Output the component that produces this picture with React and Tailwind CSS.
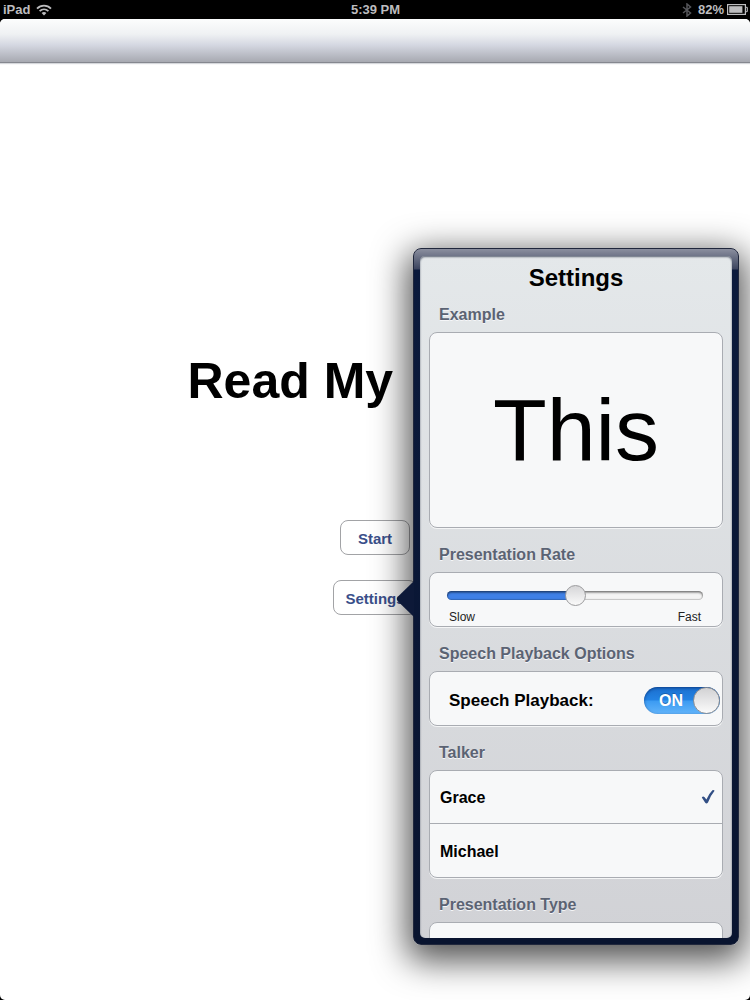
import React, { useState } from 'react';

const cardClass =
  'overflow-hidden rounded-lg border border-[#a9acb2] bg-[#f7f8f9] shadow-[0_1px_0_#f4f5f6]';

function StatusBar() {
  return (
    <header className="grid h-[19px] grid-cols-3 items-center bg-black pl-[3px] pr-[2px] text-[13px] leading-[19px] font-bold text-[#bdbdbf]">
      <div className="flex items-center gap-[6px]">
        <span>iPad</span>
        <svg width="16" height="12" viewBox="0 0 16 12" fill="none" stroke="#bdbdbf" strokeWidth="1.8">
          <path d="M1 4.6C5 .6 11 .6 15 4.6" />
          <path d="M3.6 7.2C6.2 4.7 9.8 4.7 12.4 7.2" />
          <path d="M8 11.6L5.6 9C7 7.8 9 7.8 10.4 9Z" fill="#bdbdbf" stroke="none" />
        </svg>
      </div>
      <span className="text-center">5:39 PM</span>
      <div className="flex items-center justify-end gap-[3px]">
        <svg className="mr-[3px]" width="10" height="14" viewBox="0 0 10 14" fill="none" stroke="#55565a" strokeWidth="1.5">
          <path d="M1 4L8.5 10L5 13V1L8.5 4L1 10" />
        </svg>
        <span>82%</span>
        <svg width="21" height="11" viewBox="0 0 21 11">
          <rect x=".6" y=".6" width="17.8" height="9.8" fill="none" stroke="#bdbdbf" strokeWidth="1.2" />
          <rect x="2.2" y="2.2" width="13.2" height="6.6" fill="#bdbdbf" />
          <path d="M18.6 3.2H19.4Q20.3 3.2 20.3 4V7Q20.3 7.8 19.4 7.8H18.6" fill="none" stroke="#bdbdbf" strokeWidth="1.1" />
        </svg>
      </div>
    </header>
  );
}

function Section({ title, children }) {
  return (
    <section>
      <h3 className="mt-2 h-9 pl-[10px] text-[16px] leading-[38px] font-bold text-[#5b6373] [text-shadow:0_1px_0_#f5f6f8]">
        {title}
      </h3>
      {children}
    </section>
  );
}

function SettingsPopover() {
  const [rate, setRate] = useState(50);
  const [speech, setSpeech] = useState(true);
  const [talker, setTalker] = useState('Grace');

  return (
    <div className="absolute top-[248px] right-[11px] bottom-[55px] w-[326px] rounded-lg border border-[#20273c] bg-[linear-gradient(to_bottom,#8b8f9f_0px,#5b6278_12px,#3d455f_20px,#0b1a3c_21px,#09142f_100%)] px-[6px] pt-[7px] pb-[6px] shadow-[0_10px_34px_6px_rgba(0,0,0,0.68)]">
      <svg className="absolute top-[332px] -left-[18px]" width="18" height="36" viewBox="0 0 18 36">
        <path d="M18 0V36L1.5 20Q0 18 1.5 16Z" fill="#0d1938" />
      </svg>

      <div className="h-full overflow-hidden rounded-[5px] bg-linear-to-b from-[#e4e8ea] to-[#d1d2d6] px-[9px] shadow-[inset_0_1px_2px_#5c6474]">
        <h2 className="h-10 pt-1 text-center text-[24px] leading-9 font-bold text-black">Settings</h2>
        <h3 className="h-9 pl-[10px] text-[16px] leading-[38px] font-bold text-[#5b6373] [text-shadow:0_1px_0_#f5f6f8]">
          Example
        </h3>
        <div className={`${cardClass} flex h-[196px] items-center justify-center text-[88px] leading-none text-black`}>
          This
        </div>

        <Section title="Presentation Rate">
          <div className={`${cardClass} h-[55px] pt-[11px] pr-[19px] pl-[17px]`}>
            <input
              type="range"
              aria-label="Presentation Rate"
              min="0"
              max="100"
              value={rate}
              onChange={(e) => setRate(Number(e.target.value))}
              style={{ '--rate': `${rate}%` }}
              className="block h-[22px] w-full appearance-none bg-transparent [&::-webkit-slider-runnable-track]:h-[9px] [&::-webkit-slider-runnable-track]:rounded-full [&::-webkit-slider-runnable-track]:bg-[linear-gradient(to_right,#3f80e6_var(--rate),#f4f4f4_var(--rate))] [&::-webkit-slider-runnable-track]:shadow-[inset_0_2px_2px_rgba(0,0,0,0.35),inset_0_0_1px_1px_rgba(0,0,0,0.2)] [&::-webkit-slider-thumb]:-mt-[6px] [&::-webkit-slider-thumb]:size-[21px] [&::-webkit-slider-thumb]:appearance-none [&::-webkit-slider-thumb]:rounded-full [&::-webkit-slider-thumb]:border [&::-webkit-slider-thumb]:border-[#9b9b9d] [&::-webkit-slider-thumb]:bg-linear-to-b [&::-webkit-slider-thumb]:from-[#d6d6d8] [&::-webkit-slider-thumb]:to-[#fafafa]"
            />
            <div className="flex justify-between px-[2px] text-[12px] leading-[22px] text-[#222222]">
              <span>Slow</span>
              <span>Fast</span>
            </div>
          </div>
        </Section>

        <Section title="Speech Playback Options">
          <label className={`${cardClass} flex h-[55px] items-center justify-between pr-[2px] pl-[19px] pt-1`}>
            <span className="pt-px text-[17px] font-bold text-black">Speech Playback:</span>
            <input
              type="checkbox"
              role="switch"
              checked={speech}
              onChange={(e) => setSpeech(e.target.checked)}
              className="peer sr-only"
            />
            <span className="flex h-[27px] w-[76px] items-center justify-between rounded-full bg-[linear-gradient(to_bottom,#1b6fce_0%,#2383e4_48%,#3c9bf2_52%,#62b4fa_100%)] pl-[15px] text-[16px] font-bold text-white shadow-[inset_0_1px_3px_rgba(0,30,90,0.6)] [text-shadow:0_-1px_0_#1b5fae]">
              <span>{speech ? 'ON' : 'OFF'}</span>
              <span className="size-[27px] rounded-full border border-[#8e8f93] bg-linear-to-b from-[#d2d2d4] to-[#fbfbfb]" />
            </span>
          </label>
        </Section>

        <Section title="Talker">
          <div className={`${cardClass} divide-y divide-[#a9acb2]`}>
            {['Grace', 'Michael'].map((name) => (
              <label
                key={name}
                className="flex h-[53px] items-center justify-between pt-[2px] pr-[7px] pl-[10px] text-[16px] font-bold text-black"
              >
                <span>{name}</span>
                <input
                  type="radio"
                  name="talker"
                  value={name}
                  checked={talker === name}
                  onChange={() => setTalker(name)}
                  className="sr-only"
                />
                {talker === name && (
                  <svg className="mb-[2px]" width="14" height="16" viewBox="0 0 14 16" fill="#324f85">
                    <path d="M.8 8.4Q2 6.8 3.4 8L5.4 10.4Q7.6 5 11.4 1.2Q12.8.6 13.6 1.8Q9.6 6.6 7 13.4Q5.6 15.2 4.2 13.8Z" />
                  </svg>
                )}
              </label>
            ))}
          </div>
        </Section>

        <Section title="Presentation Type">
          <div className={`${cardClass} h-[55px]`} />
        </Section>
      </div>
    </div>
  );
}

export default function App() {
  const buttonClass =
    'h-[35px] rounded-lg border border-[#a2a3a6] bg-white px-[11px] pt-[3px] text-[15px] font-bold text-[#3a4f8a]';

  return (
    <div className="relative flex min-h-screen flex-col overflow-hidden bg-black font-['Liberation_Sans',Arial,sans-serif]">
      <StatusBar />
      <div className="flex flex-1 flex-col overflow-hidden rounded-[5px] bg-white">
        <nav className="h-11 border-b border-[#85878f] bg-[linear-gradient(to_bottom,#fcfdfd_0%,#eff1f3_35%,#d5d8e2_60%,#a7a9b1_100%)] shadow-[0_1px_1px_#d5d7db]" />
        <main className="flex flex-col items-center pt-[288px]">
          <h1 className="w-1/2 text-[50px] leading-[60px] font-bold text-black">Read My</h1>
          <button type="button" className={`${buttonClass} mt-[109px] min-w-[70px]`}>
            Start
          </button>
          <button type="button" className={`${buttonClass} mt-[25px]`}>
            Settings
          </button>
        </main>
      </div>
      <SettingsPopover />
    </div>
  );
}
